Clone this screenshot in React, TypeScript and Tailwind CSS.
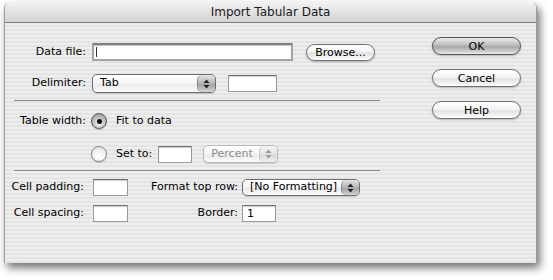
import React from 'react'

const stripes =
  'bg-[image:repeating-linear-gradient(180deg,#eeeeee_0px,#eeeeee_2px,#e4e4e4_2px,#e4e4e4_4px)]'

function Field({ className = '', value = '' }: { className?: string; value?: string }) {
  return (
    <div
      className={`h-[17px] shrink-0 bg-white border border-[#9a9a9a] border-t-[#6f6f6f] shadow-[inset_0_1px_1px_rgba(0,0,0,0.2)] pl-[4px] text-[11px] leading-[15px] ${className}`}
    >
      {value}
    </div>
  )
}

function Arrows({ disabled = false }: { disabled?: boolean }) {
  const c = disabled ? '#9a9a9a' : '#222'
  return (
    <svg width="7" height="10" viewBox="0 0 7 10">
      <path d="M3.5 0.5 L6.5 4 L0.5 4 Z" fill={c} />
      <path d="M3.5 9.5 L6.5 6 L0.5 6 Z" fill={c} />
    </svg>
  )
}

function Popup({
  label,
  className = '',
  disabled = false,
}: {
  label: string
  className?: string
  disabled?: boolean
}) {
  return (
    <div
      className={`flex shrink-0 items-stretch overflow-hidden rounded-[5px] border shadow-[0_1px_1px_rgba(0,0,0,0.15)] bg-[linear-gradient(180deg,#ffffff_0%,#f4f4f4_50%,#e9e9e9_55%,#fbfbfb_100%)] ${
        disabled ? 'border-[#b8b8b8] text-[#8c8c8c]' : 'border-[#6e6e6e] text-black'
      } ${className}`}
    >
      <span className="flex flex-1 items-center pl-[7px] text-[11px]">{label}</span>
      <span
        className={`flex w-[18px] items-center justify-center rounded-l-[5px] border-l ${
          disabled
            ? 'border-[#c4c4c4] bg-[linear-gradient(180deg,#f6f6f6_0%,#e4e4e4_50%,#d9d9d9_55%,#f0f0f0_100%)]'
            : 'border-[#8a8a8a] bg-[linear-gradient(180deg,#e4e4e4_0%,#b4b4b4_50%,#a2a2a2_55%,#d4d4d4_100%)]'
        }`}
      >
        <Arrows disabled={disabled} />
      </span>
    </div>
  )
}

function Pill({
  label,
  className = '',
  primary = false,
}: {
  label: string
  className?: string
  primary?: boolean
}) {
  return (
    <button
      className={`flex shrink-0 items-center justify-center rounded-full border text-[11px] leading-none shadow-[0_1px_2px_rgba(0,0,0,0.25)] ${
        primary
          ? 'border-[#555] bg-[linear-gradient(180deg,#ececec_0%,#bdbdbd_45%,#a6a6a6_55%,#d8d8d8_90%,#f0f0f0_100%)]'
          : 'border-[#707070] bg-[linear-gradient(180deg,#ffffff_0%,#f3f3f3_45%,#e2e2e2_55%,#f6f6f6_90%,#ffffff_100%)]'
      } ${className}`}
    >
      {label}
    </button>
  )
}

function Radio({ on = false }: { on?: boolean }) {
  return (
    <span
      className={`flex h-[16px] w-[16px] shrink-0 items-center justify-center rounded-full border shadow-[0_1px_1px_rgba(0,0,0,0.2)] ${
        on
          ? 'border-[#555] bg-[radial-gradient(circle_at_50%_70%,#f2f2f2_0%,#bcbcbc_55%,#8e8e8e_100%)]'
          : 'border-[#8a8a8a] bg-[radial-gradient(circle_at_50%_70%,#ffffff_0%,#f0f0f0_55%,#d0d0d0_100%)]'
      }`}
    >
      {on && <span className="h-[5px] w-[5px] rounded-full bg-[#111]" />}
    </span>
  )
}

function Label({ text, className = '' }: { text: string; className?: string }) {
  return <span className={`flex shrink-0 justify-end whitespace-nowrap ${className}`}>{text}</span>
}

export default function App() {
  return (
    <div className="h-[280px] w-[553px] bg-white font-['DejaVu_Sans',sans-serif] text-[11px] text-black whitespace-nowrap">
      <div className="pl-[4px] pt-[2px]">
        <div className="flex h-[261px] w-[533px] flex-col overflow-hidden rounded-t-[6px] border-x border-[#9c9c9c] shadow-[3px_5px_8px_rgba(0,0,0,0.55)]">
          <div className="flex h-[21px] shrink-0 items-center justify-center border-b border-[#7c7c7c] bg-[linear-gradient(180deg,#f2f2f2_0%,#e2e2e2_50%,#d3d3d3_100%)] text-[12px] text-[#1a1a1a]">
            Import Tabular Data
          </div>
          <div className={`flex flex-1 ${stripes}`}>
            <div className="w-[375px] shrink-0 pl-[9px]">
              <div className="mt-[20px] flex h-[18px] items-center">
                <Label text="Data file:" className="w-[72px]" />
                <div className="ml-[6px] h-[18px] w-[201px] shrink-0 border-2 border-[#a4a4a4] border-t-[#7e7e7e] bg-white shadow-[inset_0_1px_1px_rgba(0,0,0,0.25)] pl-[2px] pt-[2px]">
                  <div className="h-[10px] w-px bg-[#333]" />
                </div>
                <Pill label="Browse..." className="ml-[13px] h-[17px] w-[69px]" />
              </div>
              <div className="mt-[13px] flex h-[19px] items-center">
                <Label text="Delimiter:" className="w-[72px]" />
                <Popup label="Tab" className="ml-[6px] h-[19px] w-[124px]" />
                <Field className="ml-[12px] w-[49px]" />
              </div>
              <div className="mt-[7px] h-px w-[366px] bg-[#8a8a8a]" />
              <div className="mt-[12px] flex h-[16px] items-center">
                <Label text="Table width:" className="w-[72px]" />
                <span className="ml-[5px]">
                  <Radio on />
                </span>
                <span className="ml-[9px]">Fit to data</span>
              </div>
              <div className="mt-[16px] flex h-[18px] items-center">
                <span className="w-[72px] shrink-0" />
                <span className="ml-[5px]">
                  <Radio />
                </span>
                <span className="ml-[9px]">Set to:</span>
                <Field className="ml-[6px] w-[34px]" />
                <Popup label="Percent" disabled className="ml-[11px] h-[18px] w-[75px]" />
              </div>
              <div className="mt-[7px] h-px w-[366px] bg-[#8a8a8a]" />
              <div className="mt-[8px] flex h-[17px] items-center">
                <Label text="Cell padding:" className="w-[70px]" />
                <Field className="ml-[9px] w-[35px]" />
                <Label text="Format top row:" className="w-[110px]" />
                <Popup label="[No Formatting]" className="ml-[4px] h-[17px] w-[118px]" />
              </div>
              <div className="mt-[9px] flex h-[17px] items-center">
                <Label text="Cell spacing:" className="w-[70px]" />
                <Field className="ml-[9px] w-[35px]" />
                <Label text="Border:" className="w-[110px]" />
                <Field value="1" className="ml-[4px] w-[34px]" />
              </div>
            </div>
            <div className="ml-[52px] flex flex-col pt-[14px]">
              <Pill label="OK" primary className="h-[18px] w-[89px]" />
              <Pill label="Cancel" className="mt-[14px] h-[18px] w-[89px]" />
              <Pill label="Help" className="mt-[14px] h-[18px] w-[89px]" />
            </div>
          </div>
        </div>
      </div>
    </div>
  )
}
